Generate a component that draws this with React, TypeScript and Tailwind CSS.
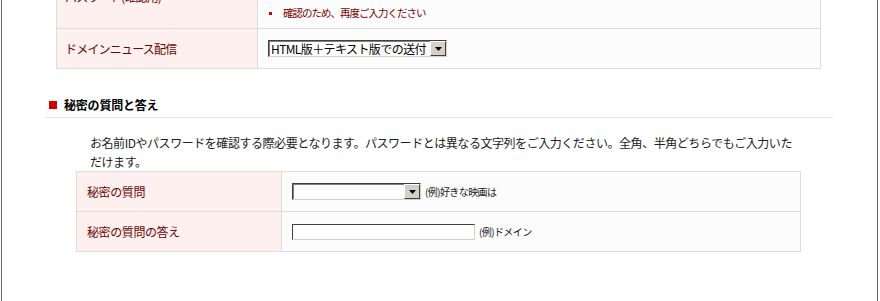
const jp = "font-['Noto_Sans_CJK_JP','Noto_Sans',sans-serif]";

const DropButton = () => (
  <div className="w-[16px] h-full bg-[#d4d0c8] border border-t-white border-l-white border-b-[#404040] border-r-[#404040] flex items-center justify-center">
    <svg width="7" height="4" viewBox="0 0 7 4">
      <path d="M0 0h7L3.5 4z" fill="#000" />
    </svg>
  </div>
);

const Select = ({ width, value }: { width: string; value?: string }) => (
  <div
    className={`${width} h-[17px] flex bg-white border border-t-[#404040] border-l-[#404040] border-b-[#d4d0c8] border-r-[#d4d0c8] shadow-[inset_1px_1px_0_#808080]`}
  >
    <div className="flex-1 pl-[2px] text-[12px] leading-[15px] tracking-[-0.6px] text-black whitespace-nowrap overflow-hidden">
      {value}
    </div>
    <DropButton />
  </div>
);

const Hint = ({ text }: { text: string }) => (
  <span className="ml-[4px] text-[10px] leading-[14px] tracking-[-0.6px] text-[#222]">{text}</span>
);

export default function App() {
  return (
    <div className={`${jp} w-[877px] h-[301px] ml-[1px] border-x border-[#666] bg-white overflow-hidden`}>
      {/* 上の表（途中から見えている） */}
      <div className="ml-[54px] mt-[-35px] w-[765px] border border-[#dcdcdc]">
        <div className="flex border-b border-[#dcdcdc]">
          <div className="w-[201px] h-[62px] shrink-0 bg-[#fdf0ee] border-r border-[#dcdcdc] pl-[8px] flex items-center text-[12px] tracking-[-0.8px] text-[#6b0505]">
            パスワード(確認用)
          </div>
          <div className="flex-1 bg-[#fcfcfc] pl-[10px] pt-[10px]">
            <div className="w-[183px] h-[16px] bg-white border border-t-[#404040] border-l-[#404040] border-b-[#d4d0c8] border-r-[#d4d0c8]" />
            <div className="mt-[13px] h-[16px] flex items-center">
              <span className="w-[3px] h-[3px] bg-[#d00000] ml-[1px]" />
              <span className="ml-[11px] text-[10.5px] leading-[16px] tracking-[-1px] text-[#7a0000]">
                確認のため、再度ご入力ください
              </span>
            </div>
          </div>
        </div>
        <div className="flex">
          <div className="w-[201px] h-[39px] shrink-0 bg-[#fdf0ee] border-r border-[#dcdcdc] pl-[8px] flex items-center text-[12px] tracking-[-0.8px] text-[#6b0505]">
            ドメインニュース配信
          </div>
          <div className="flex-1 bg-[#fcfcfc] pl-[10px] flex items-center">
            <Select width="w-[179px]" value="HTML版＋テキスト版での送付" />
          </div>
        </div>
      </div>

      {/* 見出し */}
      <div className="ml-[43px] mt-[26px] w-[788px] h-[23px] pb-[3px] border-b border-[#e6e6e6] flex items-center">
        <span className="ml-[4px] w-[8px] h-[8px] bg-[#d40000]" />
        <span className="ml-[7px] text-[12px] leading-[19px] font-bold text-black tracking-[-0.2px]">
          秘密の質問と答え
        </span>
      </div>

      <p className="ml-[88px] mt-[15px] w-[702px] text-[12px] leading-[19px] tracking-[-0.45px] text-[#222]">
        お名前IDやパスワードを確認する際必要となります。パスワードとは異なる文字列をご入力ください。全角、半角どちらでもご入力いただけます。
      </p>

      {/* 秘密の質問の表 */}
      <div className="ml-[74px] w-[725px] border border-[#dcdcdc]">
        <div className="flex border-b border-[#dcdcdc]">
          <div className="w-[205px] h-[39px] shrink-0 bg-[#fdf0ee] border-r border-[#dcdcdc] pl-[10px] flex items-center text-[12px] tracking-[-0.4px] text-[#6b0505]">
            秘密の質問
          </div>
          <div className="flex-1 bg-[#fcfcfc] pl-[10px] flex items-center">
            <Select width="w-[129px]" />
            <Hint text="(例)好きな映画は" />
          </div>
        </div>
        <div className="flex">
          <div className="w-[205px] h-[39px] shrink-0 bg-[#fdf0ee] border-r border-[#dcdcdc] pl-[10px] flex items-center text-[12px] tracking-[-0.4px] text-[#6b0505]">
            秘密の質問の答え
          </div>
          <div className="flex-1 bg-[#fcfcfc] pl-[10px] flex items-center">
            <div className="w-[183px] h-[16px] bg-white border border-t-[#404040] border-l-[#404040] border-b-[#d4d0c8] border-r-[#d4d0c8]" />
            <Hint text="(例)ドメイン" />
          </div>
        </div>
      </div>
    </div>
  );
}
